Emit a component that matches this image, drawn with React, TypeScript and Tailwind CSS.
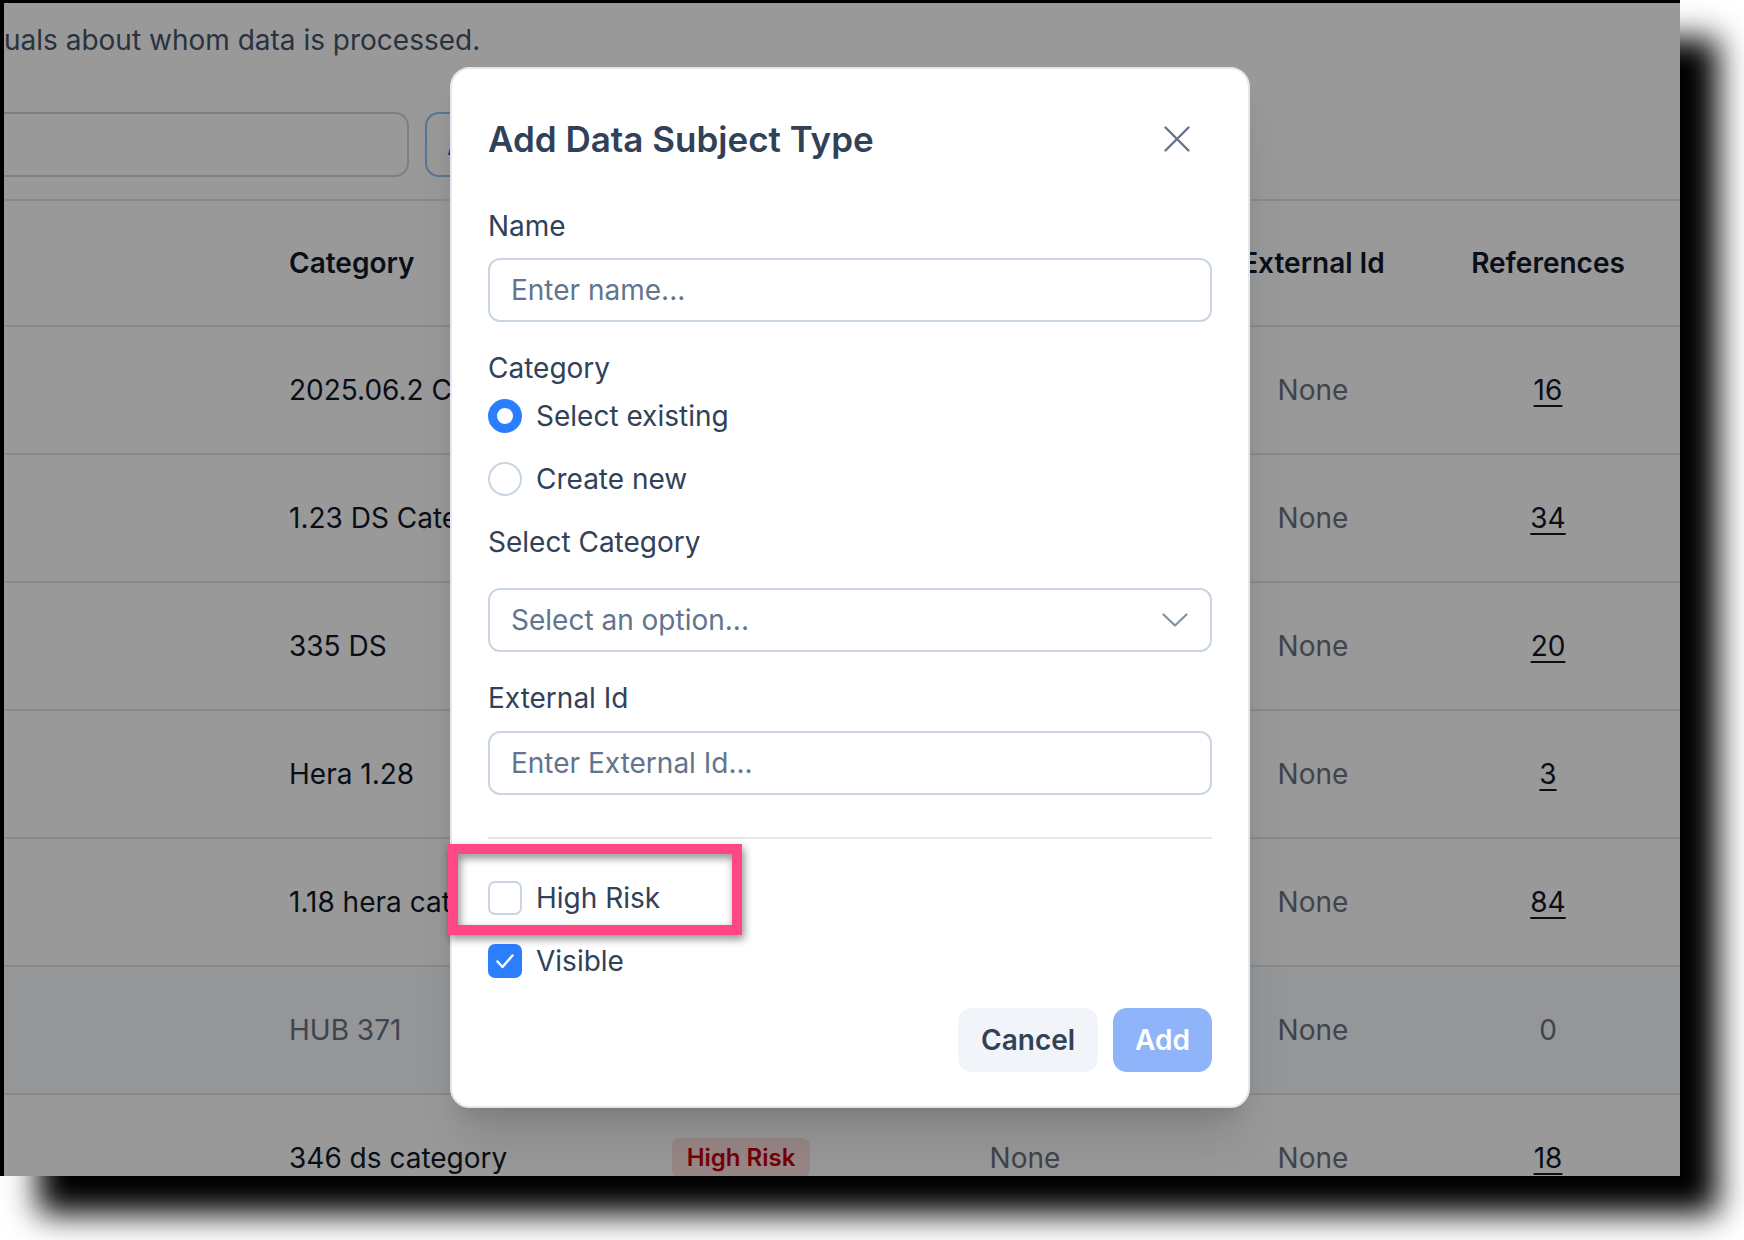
import { ReactNode } from 'react';

type Row = {
  category: string;
  risk?: boolean;
  description?: string;
  externalId: string;
  refs: number;
  muted?: boolean;
};

// rows of the list behind the dialog; cells covered by the dialog are left empty
const rows: Row[] = [
  { category: '2025.06.2 Category', externalId: 'None', refs: 16 },
  { category: '1.23 DS Category', externalId: 'None', refs: 34 },
  { category: '335 DS', externalId: 'None', refs: 20 },
  { category: 'Hera 1.28', externalId: 'None', refs: 3 },
  { category: '1.18 hera category', externalId: 'None', refs: 84 },
  { category: 'HUB 371', externalId: 'None', refs: 0, muted: true },
  { category: '346 ds category', risk: true, description: 'None', externalId: 'None', refs: 18 },
];

const cols = 'grid grid-cols-[285px_311px_282px_286px_290px_180px_1fr] items-center';

function Radio({ checked, label }: { checked?: boolean; label: string }) {
  return (
    <div className="flex h-[40px] items-center gap-[14px]">
      {checked ? (
        <span className="h-[34px] w-[34px] rounded-full border-[9px] border-blue-500 bg-white" />
      ) : (
        <span className="h-[34px] w-[34px] rounded-full border-2 border-slate-300 bg-white" />
      )}
      <span className="text-[28px] leading-[40px] text-slate-700">{label}</span>
    </div>
  );
}

function Checkbox({ checked, label }: { checked?: boolean; label: string }) {
  return (
    <div className="flex h-[40px] items-center gap-[14px]">
      {checked ? (
        <span className="flex h-[34px] w-[34px] items-center justify-center rounded-[7px] bg-blue-500">
          <svg width="34" height="34" viewBox="0 0 34 34" fill="none">
            <polyline points="9.5,17.5 14.5,23 24.5,11.5" stroke="white" strokeWidth="2.4" strokeLinecap="round" strokeLinejoin="round" />
          </svg>
        </span>
      ) : (
        <span className="h-[34px] w-[34px] rounded-[7px] border-2 border-slate-300 bg-white" />
      )}
      <span className="text-[28px] leading-[40px] text-slate-700">{label}</span>
    </div>
  );
}

function Label({ children, className = '' }: { children: ReactNode; className?: string }) {
  return <div className={`text-[28px] leading-[40px] text-slate-700 ${className}`}>{children}</div>;
}

export default function App() {
  return (
    <div className="h-[1240px] w-[1744px] overflow-hidden bg-white font-['Inter','Liberation_Sans',sans-serif]">
      <div className="relative h-[1176px] w-[1680px] overflow-hidden border-l-4 border-t-[3px] border-black bg-white shadow-[38px_38px_30px_#000]">
        {/* page underneath */}
        <div className="flex flex-col">
          <div className="mt-[17px] whitespace-nowrap text-[28px] leading-[40px] text-slate-600">
            uals about whom data is processed.
          </div>
          <div className="mt-[52px] flex h-[65px] items-center">
            <div className="-ml-[25px] h-[65px] w-[430px] rounded-[14px] border-2 border-gray-300 bg-white" />
            <div className="ml-[16px] flex h-[65px] w-[200px] items-center overflow-hidden whitespace-nowrap rounded-[14px] border-2 border-blue-300 px-[20px] text-[28px] font-medium text-blue-600">
              A
            </div>
          </div>
          <div className="mt-[22px] border-t-2 border-gray-200">
            <div className={`${cols} h-[126px] border-b-2 border-gray-200 text-[28px] font-semibold text-gray-900`}>
              <div />
              <div>Category</div>
              <div />
              <div />
              <div className="text-center">External Id</div>
              <div className="text-center">References</div>
              <div />
            </div>
            {rows.map((r) => (
              <div
                key={r.category}
                className={`${cols} h-[128px] border-b-2 border-gray-200 text-[28px] ${r.muted ? 'bg-slate-50' : 'bg-white'}`}
              >
                <div />
                <div className={`w-[161px] overflow-hidden whitespace-nowrap ${r.risk ? 'w-auto' : ''} ${r.muted ? 'text-gray-500' : 'text-gray-900'}`}>
                  {r.category}
                </div>
                <div className="flex justify-center">
                  {r.risk && (
                    <span className="flex h-[40px] items-center rounded-[8px] bg-red-100 px-[15px] text-[24px] font-semibold text-red-700">
                      High Risk
                    </span>
                  )}
                </div>
                <div className="text-center text-gray-500">{r.description}</div>
                <div className="text-center text-gray-500">{r.externalId}</div>
                <div className="text-center">
                  {r.refs > 0 ? (
                    <span className="text-gray-900 underline decoration-2 underline-offset-[5px]">{r.refs}</span>
                  ) : (
                    <span className="text-gray-500">{r.refs}</span>
                  )}
                </div>
                <div />
              </div>
            ))}
          </div>
        </div>

        {/* backdrop */}
        <div className="absolute inset-0 bg-black/40" />

        {/* dialog */}
        <div className="absolute left-[446px] top-[64px] w-[800px] rounded-[20px] border-2 border-slate-200 bg-white px-[36px] pb-[34px] pt-[42px] shadow-[0_40px_50px_-10px_rgba(0,0,0,0.12),0_16px_20px_-12px_rgba(0,0,0,0.12)]">
          <div className="flex h-[56px] items-center justify-between">
            <h2 className="text-[35px] font-semibold leading-[56px] text-slate-700">Add Data Subject Type</h2>
            <button className="mr-[22px] flex h-[26px] w-[26px] items-center justify-center">
              <svg width="26" height="26" viewBox="0 0 26 26" fill="none">
                <path d="M1.5 1.5L24.5 24.5M24.5 1.5L1.5 24.5" stroke="#64748b" strokeWidth="2.4" strokeLinecap="round" />
              </svg>
            </button>
          </div>

          <Label className="mt-[39px]">Name</Label>
          <input
            readOnly
            placeholder="Enter name..."
            className="mt-[12px] block h-[64px] w-full rounded-[12px] border-2 border-slate-300 bg-white pl-[21px] text-[28px] text-slate-700 outline-none placeholder:text-slate-500"
          />

          <Label className="mt-[26px]">Category</Label>
          <div className="mt-[8px]">
            <Radio checked label="Select existing" />
          </div>
          <div className="mt-[23px]">
            <Radio label="Create new" />
          </div>

          <Label className="mt-[23px]">Select Category</Label>
          <div className="mt-[26px] flex h-[64px] w-full items-center justify-between rounded-[12px] border-2 border-slate-300 bg-white pl-[21px] pr-[22px]">
            <span className="text-[28px] text-slate-500">Select an option...</span>
            <svg width="26" height="14" viewBox="0 0 26 14" fill="none">
              <polyline points="1.5,1.5 13,12.5 24.5,1.5" stroke="#8391a7" strokeWidth="2.2" strokeLinecap="round" strokeLinejoin="round" />
            </svg>
          </div>

          <Label className="mt-[26px]">External Id</Label>
          <input
            readOnly
            placeholder="Enter External Id..."
            className="mt-[13px] block h-[64px] w-full rounded-[12px] border-2 border-slate-300 bg-white pl-[21px] text-[28px] text-slate-700 outline-none placeholder:text-slate-500"
          />

          <div className="mt-[42px] h-[2px] w-full bg-slate-200" />

          <div className="mt-[39px]">
            <Checkbox label="High Risk" />
          </div>
          <div className="mt-[23px]">
            <Checkbox checked label="Visible" />
          </div>

          <div className="mt-[27px] flex justify-end gap-[15px]">
            <button className="h-[64px] rounded-[14px] bg-slate-100 px-[23px] text-[28px] font-semibold text-slate-700">
              Cancel
            </button>
            <button className="h-[64px] rounded-[14px] bg-[#8fb4f9] px-[22px] text-[28px] font-semibold text-white">
              Add
            </button>
          </div>
        </div>

        {/* annotation */}
        <div className="absolute left-[444px] top-[841px] h-[91px] w-[294px] border-[10px] border-[#ff4785] drop-shadow-[2px_4px_4px_rgba(0,0,0,0.45)]" />
      </div>
    </div>
  );
}
